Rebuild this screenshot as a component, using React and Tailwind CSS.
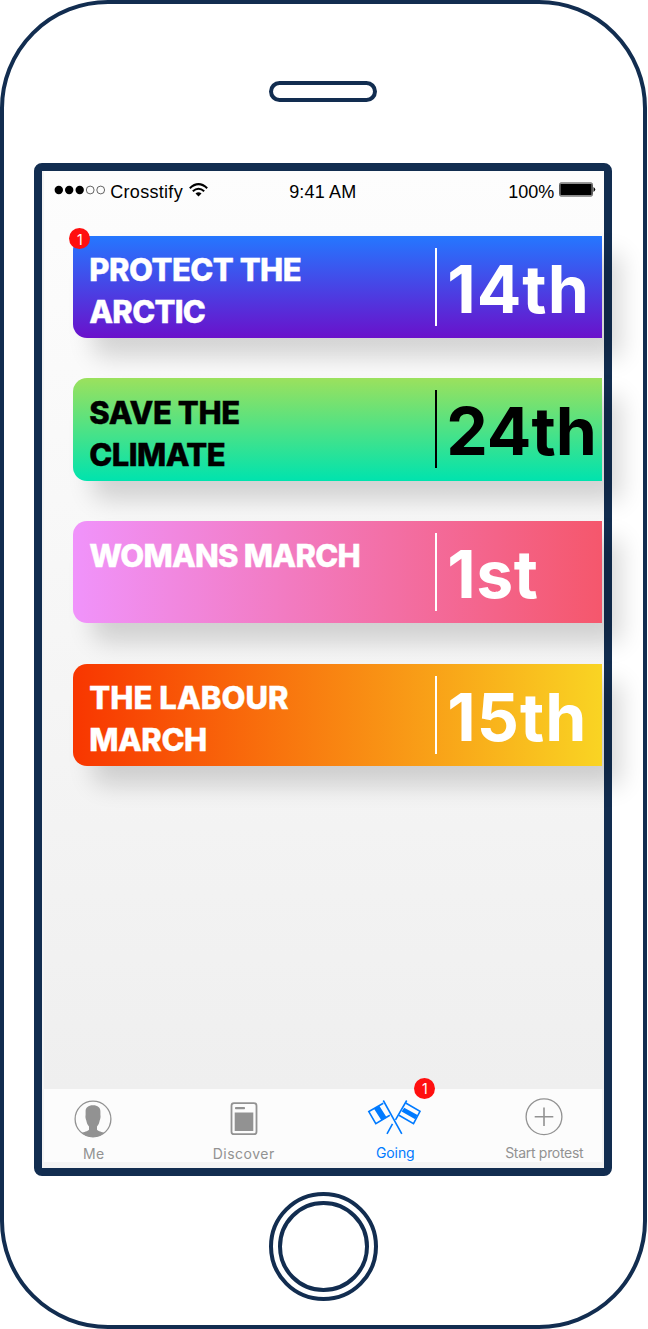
import React from "react";

const cards = [
  {
    title: [
      { text: "PROTECT THE", spacing: "tracking-[-0.5px]" },
      { text: "ARCTIC", spacing: "tracking-[-0.75px]" },
    ],
    day: "14th",
    daySpacing: "tracking-[1px]",
    look: "bg-linear-to-b/srgb from-[#2577ff] to-[#6a11cb] text-white",
    rule: "bg-white",
    badge: "1",
  },
  {
    title: [
      { text: "SAVE THE", spacing: "tracking-[-0.4px]" },
      { text: "CLIMATE", spacing: "tracking-[-0.55px]" },
    ],
    day: "24th",
    daySpacing: "-ml-px tracking-[0px]",
    look: "bg-linear-to-b/srgb from-[#9be15d] to-[#00e3ae] text-black",
    rule: "bg-black",
  },
  {
    title: [{ text: "WOMANS MARCH", spacing: "tracking-[-0.75px]" }],
    day: "1st",
    daySpacing: "tracking-[0.6px]",
    look: "bg-linear-to-r/srgb from-[#f093fb] to-[#f5576c] text-white",
    rule: "bg-white",
  },
  {
    title: [
      { text: "THE LABOUR", spacing: "tracking-[0.05px]" },
      { text: "MARCH", spacing: "tracking-[-0.5px]" },
    ],
    day: "15th",
    daySpacing: "tracking-[1px]",
    look: "bg-linear-to-r/srgb from-[#f83600] to-[#f9d423] text-white",
    rule: "bg-white",
  },
];

function StatusBar() {
  return (
    <div className="grid h-[41px] grid-cols-3 items-center pr-[8px] pl-[10px] font-['Liberation_Sans',sans-serif] text-[18px] leading-[20px] text-black">
      <div className="flex items-center">
        <svg className="-mt-[3px] h-[10px] w-[52px]" viewBox="0 0 52 10">
          <circle cx="4.8" cy="5" r="4.2" />
          <circle cx="15.2" cy="5" r="4.2" />
          <circle cx="25.7" cy="5" r="4.2" />
          <circle cx="36.2" cy="5" r="3.9" fill="none" stroke="#000" strokeWidth=".6" />
          <circle cx="46.7" cy="5" r="3.9" fill="none" stroke="#000" strokeWidth=".6" />
        </svg>
        <span className="ml-[4px] tracking-[0.3px]">Crosstify</span>
        <svg className="-mt-[3px] ml-[6px] h-[14px] w-[19px]" viewBox="0 0 19 14" fill="none" stroke="#000" strokeWidth="2">
          <path d="M.8 5.2Q9.5-3 18.2 5.2M3.8 8.3Q9.5 3.1 15.2 8.3" />
          <path d="M6.5 10.6Q9.5 8 12.5 10.6L9.5 13.6Z" fill="#000" stroke="none" />
        </svg>
      </div>
      <div className="pr-[5px] text-center tracking-[0.15px]">9:41 AM</div>
      <div className="flex items-center justify-end">
        <span>100%</span>
        <svg className="-mt-[3px] ml-[5px] h-[16px] w-[37px]" viewBox="0 0 37 16">
          <rect x=".5" y=".9" width="33" height="13.2" rx="1.5" fill="none" stroke="#333" strokeWidth=".8" />
          <rect x="1.3" y="1.7" width="31.4" height="11.6" rx=".7" />
          <path d="M34.5 5Q38 7.5 34.5 10Z" />
        </svg>
      </div>
    </div>
  );
}

function Badge({ children, className }) {
  return (
    <span className={"absolute flex h-[21px] w-[21px] items-center justify-center rounded-full bg-[#ff0f0f] font-['Inter',sans-serif] text-[14px] leading-none text-white " + className}>
      {children}
    </span>
  );
}

function Card({ card }) {
  return (
    <div className={"relative flex h-[102.4px] rounded-l-[14px] pt-[13px] pl-[16px] font-['Inter',sans-serif] shadow-[19px_19px_24px_rgba(0,0,0,0.155)] " + card.look}>
      <div className="w-[346px] pt-[0.5px] text-[31px] leading-[42px] font-extrabold [-webkit-text-stroke:0.4px_currentColor]">
        {card.title.map((line) => (
          <div key={line.text} className={line.spacing}>{line.text}</div>
        ))}
      </div>
      <div className={"-mt-px h-[78px] w-[1.5px] " + card.rule} />
      <div className="ml-[10.500px] text-[66px] leading-[80px] font-bold">
        <div className={card.daySpacing}>{card.day}</div>
      </div>
      {card.badge && <Badge className="-top-[8px] -left-[4px] pt-[4px]">{card.badge}</Badge>}
    </div>
  );
}

function MeIcon() {
  return (
    <svg className="h-[38px] w-[38px]" viewBox="0 0 38 38">
      <circle cx="19" cy="19" r="17.9" fill="none" stroke="#929292" strokeWidth="1.3" />
      <path
        fill="#929292"
        d="M19 5.300C23.800 5.300 26.400 7.600 26.400 11.500L26.400 15C26.800 16.500 26.400 19 25.700 20.500C25.300 23 24.300 25 23 26.500L23 29.800C24.200 31.500 28.200 32 30.400 32.700Q25.500 37 19 37Q12.500 37 7.600 32.700C9.800 32 13.800 31.500 15 29.800L15 26.500C13.700 25 12.700 23 12.300 20.500C11.600 19 11.200 16.500 11.600 15L11.600 11.500C11.600 7.600 14.200 5.300 19 5.300Z"
      />
    </svg>
  );
}

function DiscoverIcon() {
  return (
    <svg className="h-[38px] w-[38px]" viewBox="0 0 38 38" fill="#929292">
      <rect x="6.5" y="3.2" width="25" height="31" rx="2.5" fill="none" stroke="#929292" strokeWidth="1.8" />
      <rect x="10" y="7" width="10" height="2.2" rx=".8" />
      <rect x="9.7" y="12.5" width="18.6" height="18.5" />
    </svg>
  );
}

function FlagsIcon() {
  return (
    <svg className="-ml-[2px] h-[38px] w-[56px]" viewBox="0 0 56 38" fill="none" stroke="#007aff" strokeWidth="1.6">
      <path d="M16.3 2.5L34.8 35.8M39.7 2.5L28.500 21.800M25.500 25.800L20 35.800" />
      <path d="M16.3 5.300L1.800 13.600L8.800 25.600L22.800 17.300M38.700 5L53 13.300L46.500 25.600L32 17.300" />
      <path d="M7 10.800L12.300 7.700L19.700 19.500L14.500 22.600ZM37.200 9.700L50.500 17L48.200 21.300L34.600 13.600Z" fill="#007aff" stroke="none" />
    </svg>
  );
}

function PlusIcon() {
  return (
    <svg className="h-[38px] w-[38px]" viewBox="0 0 38 38" fill="none" stroke="#929292">
      <circle cx="19" cy="18.7" r="17.9" strokeWidth="1.3" />
      <path d="M9.7 18.700H28.300M19 9.400V28" strokeWidth="1.6" />
    </svg>
  );
}

function Tab({ icon, label, className, labelClass }) {
  return (
    <div className={"relative flex flex-col items-center " + className}>
      {icon}
      <span className={"text-[14px] leading-[18px] whitespace-nowrap " + labelClass}>{label}</span>
    </div>
  );
}

function TabBar() {
  return (
    <div className="relative mr-[2px] flex h-[73px] items-start bg-[#fcfcfc] font-['Inter',sans-serif] text-[#929292]">
      <Tab className="w-[98px] pt-[11px]" icon={<MeIcon />} label="Me" labelClass="mt-[7px] pl-px tracking-[0.3px]" />
      <Tab className="w-[203px] pt-[11px]" icon={<DiscoverIcon />} label="Discover" labelClass="mt-[7px] tracking-[0.5px]" />
      <Tab className="w-[101px] pt-[9px] text-[#007aff]" icon={<FlagsIcon />} label="Going" labelClass="mt-[8px] -ml-px tracking-[-0.1px]" />
      <Tab className="w-[156px] pt-[9px] pl-[40px]" icon={<PlusIcon />} label="Start protest" labelClass="mt-[8px] tracking-[-0.3px]" />
      <Badge className="-top-[11px] left-[370px]">1</Badge>
    </div>
  );
}

export default function App() {
  return (
    <div className="h-[1329px] w-[648px] bg-white">
      <div className="flex h-[1329px] w-[646.5px] flex-col items-center rounded-[108px] border-4 border-[#122d50] bg-white pt-[77px]">
        <div className="h-[21px] w-[108px] shrink-0 rounded-full border-4 border-[#122d50]" />
        <div className="mt-[61px] flex h-[1013px] w-[578px] shrink-0 flex-col rounded-[8px] border-8 border-[#122d50] bg-[#f4f4f4] pl-[2px]">
          <div className="flex h-[918px] flex-col bg-linear-to-b/srgb from-[#fdfdfd] to-[#efefef]">
            <StatusBar />
            <div className="mt-[23.500px] mr-[2px] ml-[29px] flex flex-col gap-[40.400px]">
              {cards.map((card) => (
                <Card key={card.day} card={card} />
              ))}
            </div>
          </div>
          <TabBar />
        </div>
        <div className="mt-[16px] h-[109px] w-[109px] shrink-0 rounded-full border-4 border-[#122d50] p-[5px]">
          <div className="h-full w-full rounded-full border-4 border-[#122d50]" />
        </div>
      </div>
    </div>
  );
}
